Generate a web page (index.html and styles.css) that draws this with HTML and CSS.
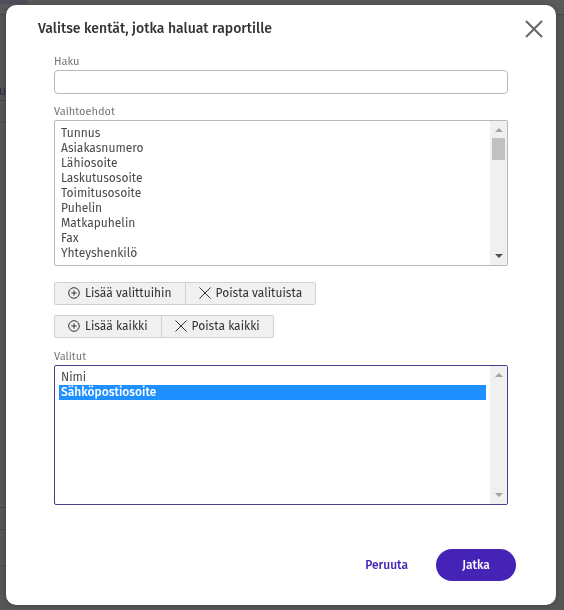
FILE: index.html
```html
<!DOCTYPE html>
<html lang="fi">
<head>
    <meta charset="UTF-8">
    <meta name="viewport" content="width=device-width, initial-scale=1.0">
    <title>Valitse kentät</title>
    <link rel="stylesheet" href="styles.css">
</head>
<body>
<div class="page" aria-hidden="true">
    <div class="page-top"></div>
    <div class="page-title"><span>ku</span></div>
    <div class="page-row"></div>
    <div class="page-content"></div>
    <div class="page-row"></div>
    <div class="page-row page-row-tall"></div>
</div>
<div class="modal" role="dialog" aria-labelledby="modal-title">
    <div class="modal-header">
        <h1 id="modal-title">Valitse kentät, jotka haluat raportille</h1>
        <button type="button" class="close" aria-label="Sulje">
            <svg viewBox="0 0 18 18" width="18" height="18"><path d="M1 1 17 17M17 1 1 17" fill="none" stroke="#666" stroke-width="2"/></svg>
        </button>
    </div>
    <form class="modal-body">
        <label for="search">Haku</label>
        <input type="text" id="search" class="search">

        <label for="options">Vaihtoehdot</label>
        <div class="listbox">
            <select id="options" multiple size="9">
                <option>Tunnus</option>
                <option>Asiakasnumero</option>
                <option>Lähiosoite</option>
                <option>Laskutusosoite</option>
                <option>Toimitusosoite</option>
                <option>Puhelin</option>
                <option>Matkapuhelin</option>
                <option>Fax</option>
                <option>Yhteyshenkilö</option>
            </select>
            <div class="scrollbar" aria-hidden="true">
                <svg class="arrow" viewBox="0 0 8 4"><path d="M0 4h8L4 0z"/></svg>
                <div class="thumb"></div>
                <svg class="arrow arrow-down arrow-active" viewBox="0 0 8 4"><path d="M0 0h8L4 4z"/></svg>
            </div>
        </div>

        <div class="buttons">
            <div class="button-group">
                <button type="button">
                    <svg viewBox="0 0 12 12" width="12" height="12"><circle cx="6" cy="6" r="5.3"/><path d="M6 3.3v5.4M3.3 6h5.4"/></svg>
                    Lisää valittuihin
                </button>
                <button type="button">
                    <svg viewBox="0 0 12 12" width="12" height="12"><path d="M.5.5l11 11M11.5.5l-11 11"/></svg>
                    Poista valituista
                </button>
            </div>
            <div class="button-group">
                <button type="button">
                    <svg viewBox="0 0 12 12" width="12" height="12"><circle cx="6" cy="6" r="5.3"/><path d="M6 3.3v5.4M3.3 6h5.4"/></svg>
                    Lisää kaikki
                </button>
                <button type="button">
                    <svg viewBox="0 0 12 12" width="12" height="12"><path d="M.5.5l11 11M11.5.5l-11 11"/></svg>
                    Poista kaikki
                </button>
            </div>
        </div>

        <label for="selected">Valitut</label>
        <div class="listbox listbox-focus">
            <select id="selected" multiple size="9">
                <option>Nimi</option>
                <option selected>Sähköpostiosoite</option>
            </select>
            <div class="scrollbar" aria-hidden="true">
                <svg class="arrow" viewBox="0 0 8 4"><path d="M0 4h8L4 0z"/></svg>
                <svg class="arrow arrow-down" viewBox="0 0 8 4"><path d="M0 0h8L4 4z"/></svg>
            </div>
        </div>
    </form>
    <div class="modal-footer">
        <button type="button" class="cancel">Peruuta</button>
        <button type="button" class="submit">Jatka</button>
    </div>
</div>
</body>
</html>
```
FILE: styles.css
```css
* {
    box-sizing: border-box;
}

body {
    margin: 0;
    padding: 5px 8px 5px 6px;
    background-color: #565656;
    font-family: "Fira Sans", "Noto Sans", sans-serif;
    font-size: 12px;
    color: #4a4a4a;
}

button,
input,
select {
    font: inherit;
}

button {
    cursor: pointer;
}

/* Dimmed page behind the dialog */
.page {
    position: fixed;
    inset: 0;
    overflow: hidden;
}

.page > div {
    border-bottom: 1px solid #474747;
}

.page-top {
    height: 15px;
    background: linear-gradient(#4f4c5c, #4f4c5c) no-repeat 0 0 / 28px 4px #5a5a5a;
}

.page-title {
    display: flex;
    align-items: flex-end;
    justify-content: flex-end;
    width: 6px;
    height: 86px;
    padding-bottom: 2px;
    color: #38293f;
}

.page-row {
    width: 6px;
    height: 22px;
}

.page-row-tall {
    height: 36px;
}

.page-content {
    width: 6px;
    height: 385px;
}

/* Dialog */
.modal {
    position: relative;
    padding: 12px 12px 24px 32px;
    min-height: calc(100vh - 10px);
    border-radius: 10px;
    background-color: #fff;
    box-shadow: 0 0 4px rgba(0, 0, 0, 0.3);
}

.modal-header {
    display: flex;
    justify-content: space-between;
    align-items: center;
}

.modal-header h1 {
    margin: 0;
    font-size: 14px;
    line-height: 24px;
    font-weight: 500;
    color: #333;
}

.close {
    display: flex;
    padding: 1px;
    border: 0;
    background: none;
}

.modal-body {
    padding: 13px 36px 0 16px;
}

.modal-body label {
    display: block;
    font-size: 11px;
    line-height: 16px;
    color: #757575;
}

.search {
    display: block;
    width: 100%;
    height: 24px;
    margin-bottom: 10px;
    border: 1px solid #b8b8b8;
    border-radius: 4px;
}

.listbox {
    display: flex;
    height: 146px;
    margin-bottom: 16px;
    border: 1px solid #b8b8b8;
    border-radius: 2px;
}

.listbox select {
    flex: 1;
    min-width: 0;
    padding: 5px 4px;
    border: 0;
    outline: none;
    background: none;
    color: #4a4a4a;
    overflow: hidden;
    scrollbar-width: none;
}

.listbox option {
    min-height: 15px;
    padding: 0 2px;
    line-height: 15px;
}

.listbox option:checked {
    background: linear-gradient(#1e90ff, #1e90ff);
    color: #fff;
    font-weight: 500;
}

.listbox-focus {
    height: 140px;
    border-color: #483d8b;
}

.listbox-focus select {
    padding: 4px;
}

.scrollbar {
    display: flex;
    flex-direction: column;
    align-items: center;
    width: 17px;
    padding: 7px 0;
    background-color: #f0f0f0;
}

.arrow {
    width: 8px;
    height: 4px;
    fill: #a3a3a3;
}

.arrow-down {
    margin-top: auto;
}

.arrow-active {
    fill: #505050;
}

.thumb {
    width: 13px;
    height: 22px;
    margin-top: 6px;
    background-color: #c1c1c1;
}

.buttons {
    display: flex;
    flex-direction: column;
    gap: 10px;
    margin-bottom: 11px;
}

.button-group {
    display: flex;
}

.button-group button {
    display: flex;
    align-items: center;
    gap: 5px;
    height: 23px;
    padding: 0 13px 1px;
    border: 1px solid #d0d0d0;
    border-radius: 2px 0 0 2px;
    background-color: #f0f0f0;
    color: #333;
    white-space: nowrap;
}

.button-group button + button {
    margin-left: -1px;
    border-radius: 0 2px 2px 0;
}

.button-group svg {
    fill: none;
    stroke: #333;
    stroke-width: 1;
}

.modal-footer {
    display: flex;
    justify-content: flex-end;
    align-items: center;
    gap: 12px;
    padding: 28px 28px 0 0;
}

.modal-footer button {
    height: 32px;
    border: 0;
    border-radius: 16px;
    font-weight: 500;
}

.cancel {
    padding: 0 16px;
    background: none;
    color: #4623b7;
}

.submit {
    width: 80px;
    background-color: #4623b7;
    color: #fff;
}
```
